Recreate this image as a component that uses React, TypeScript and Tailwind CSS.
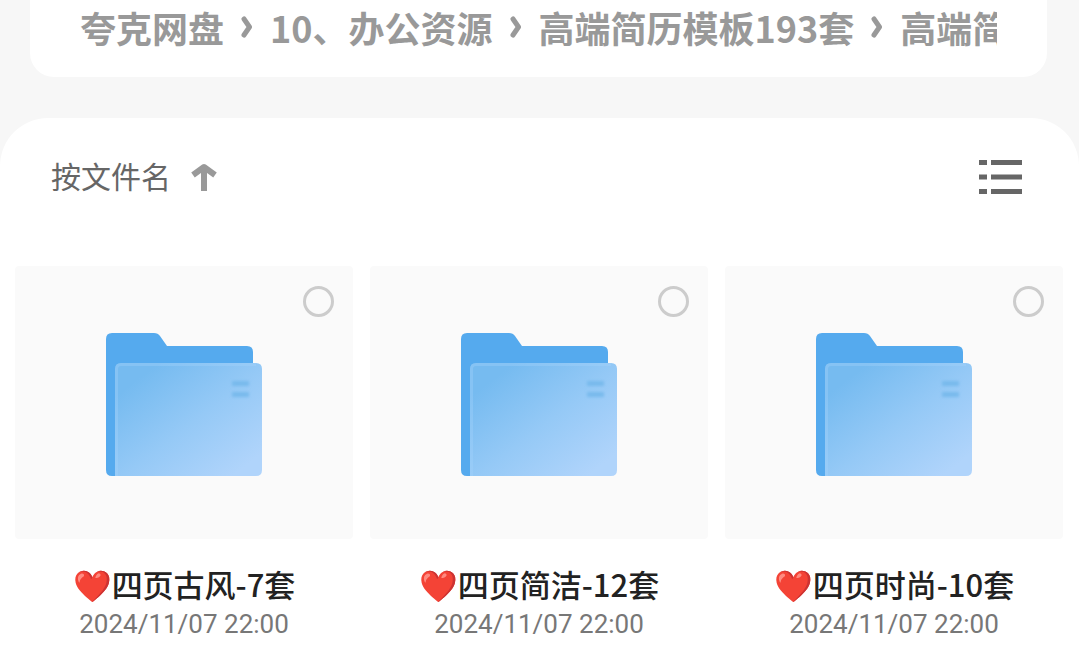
import React, { useState } from 'react';

const crumbs = ['夸克网盘', '10、办公资源', '高端简历模板193套', '高端简'];

const folders = [
  { id: 'gufeng', name: '四页古风-7套', date: '2024/11/07 22:00' },
  { id: 'jianjie', name: '四页简洁-12套', date: '2024/11/07 22:00' },
  { id: 'shishang', name: '四页时尚-10套', date: '2024/11/07 22:00' },
];

function FolderIcon() {
  return (
    <svg width="156" height="143" viewBox="0 0 156 143" aria-hidden="true">
      <defs>
        <linearGradient id="front" x1="0.1" y1="0.2" x2="0.85" y2="0.95">
          <stop offset="0" stopColor="#76bbf0" />
          <stop offset="0.5" stopColor="#95c9f6" />
          <stop offset="1" stopColor="#b0d4fb" />
        </linearGradient>
        <filter id="soft" x="-20%" y="-80%" width="140%" height="260%">
          <feGaussianBlur stdDeviation="1.5" />
        </filter>
      </defs>
      <path
        d="M6 0H48Q52 0 54 3L61 13H141Q147 13 147 19V60L20 143H6Q0 143 0 137V6Q0 0 6 0Z"
        fill="#55aaee"
      />
      <path d="M9 143V36Q9 30 15 30H150Q156 30 156 36V137Q156 143 150 143Z" fill="url(#front)" />
      <path d="M10.5 143V36Q10.5 31.5 15 31.5H150" fill="none" stroke="#a5d4fb" strokeWidth="3" strokeOpacity="0.35" />
      <g fill="#6fb5ea" fillOpacity="0.8" filter="url(#soft)">
        <rect x="126" y="48" width="17" height="5" rx="1" />
        <rect x="126" y="59" width="17" height="5" rx="1" />
      </g>
    </svg>
  );
}

function Breadcrumb() {
  return (
    <nav aria-label="路径" className="mr-8 ml-[30px] rounded-b-3xl bg-white px-[50px] pt-0.5 pb-[25px]">
      <ol className="flex overflow-hidden text-4xl leading-[50px] font-bold whitespace-nowrap text-[#999]">
        {crumbs.map((crumb, i) => (
          <li key={i} className="flex shrink-0 items-center">
            {i > 0 && (
              <span className="flex w-[46px] justify-center">
                <svg width="12" height="22" viewBox="0 0 12 22" aria-hidden="true">
                  <path
                    d="M3 3L8.5 11L3 19"
                    fill="none"
                    stroke="#999"
                    strokeWidth="5"
                    strokeLinecap="round"
                    strokeLinejoin="round"
                  />
                </svg>
              </span>
            )}
            <a href="#">{crumb}</a>
          </li>
        ))}
      </ol>
    </nav>
  );
}

function Toolbar({ ascending, onToggle }: { ascending: boolean; onToggle: () => void }) {
  return (
    <div className="flex items-center justify-between pr-[57px] pl-[51px]">
      <button type="button" onClick={onToggle} className="flex h-10 items-center gap-5 text-3xl text-[#666]">
        <span className="pb-1">按文件名</span>
        <svg width="26" height="28" viewBox="0 0 26 28" className={ascending ? '' : 'rotate-180'} aria-hidden="true">
          <path d="M13 28V4M2 12L13 4L24 12" fill="none" stroke="#999" strokeWidth="6" strokeLinejoin="round" />
        </svg>
      </button>
      <button type="button" aria-label="列表视图">
        <svg width="43" height="34" viewBox="0 0 43 34" fill="#666" aria-hidden="true">
          <path d="M0 0h8v5H0zM12 0h31v5H12zM0 14.500h8v5H0zM12 14.500h31v5H12zM0 29h8v5H0zM12 29h31v5H12z" />
        </svg>
      </button>
    </div>
  );
}

function App() {
  const [ascending, setAscending] = useState(true);
  const items = ascending ? folders : [...folders].reverse();

  return (
    <div className="flex min-h-screen flex-col bg-[#f7f7f7] font-['Noto_Sans_CJK_SC',sans-serif]" lang="zh-CN">
      <Breadcrumb />
      <main className="mt-[41px] flex-1 rounded-t-[48px] bg-white pt-[39px]">
        <Toolbar ascending={ascending} onToggle={() => setAscending(!ascending)} />
        <ul className="mt-[69px] grid grid-cols-3 gap-[17px] pr-4 pl-[15px]">
          {items.map((folder) => (
            <li key={folder.id}>
              <div className="relative flex justify-center rounded bg-[#fafafa] pt-[67px] pb-[63px]">
                <FolderIcon />
                <input
                  type="checkbox"
                  aria-labelledby={folder.id}
                  className="absolute top-5 right-[19px] size-[31px] appearance-none rounded-full border-3 border-[#ccc] checked:bg-[#55aaee]"
                />
              </div>
              <h2 id={folder.id} className="mt-[25px] text-center text-[31px] leading-10 font-medium text-[#222]">
                ❤️{folder.name}
              </h2>
              <p className="mt-0.5 text-center font-[Roboto,sans-serif] text-[26px] leading-9 text-[#777]">
                {folder.date}
              </p>
            </li>
          ))}
        </ul>
      </main>
    </div>
  );
}

export default App;
